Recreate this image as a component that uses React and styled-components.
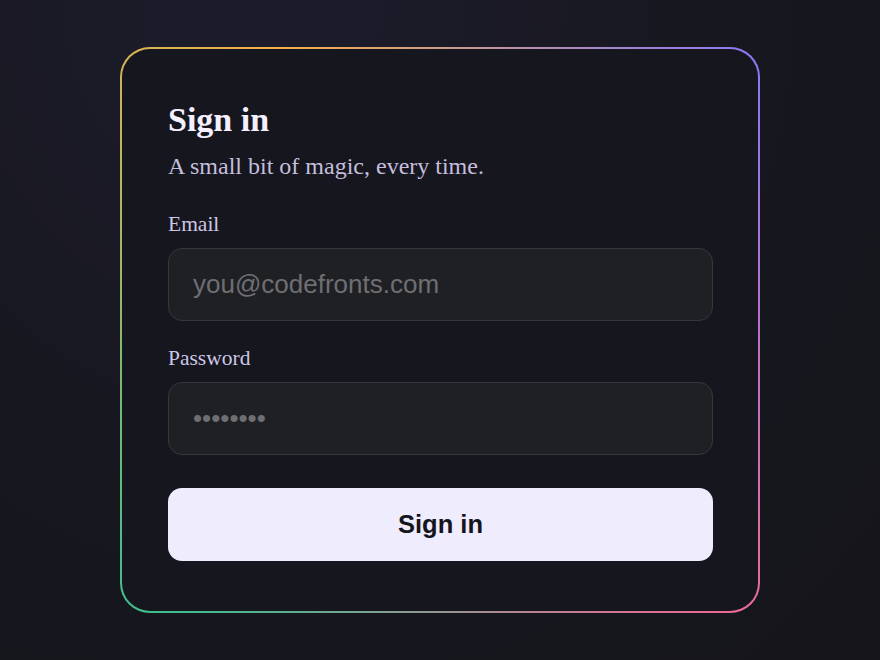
import styled, { createGlobalStyle } from "styled-components";

const GlobalStyle = createGlobalStyle`
  * { box-sizing: border-box; }
  html, body {
    margin: 0;
    padding: 0;
    background: #15151c;
  }
`;

const Page = styled.div`
  min-height: 100vh;
  display: flex;
  align-items: center;
  justify-content: center;
  background: radial-gradient(ellipse at 30% 0%, #1d1c2c 0%, #17171f 55%, #15151b 100%);
`;

// gradient ring around the card
const Frame = styled.div`
  width: 640px;
  padding: 2px;
  border-radius: 30px;
  background: conic-gradient(
    from 330deg,
    #f5b047 0deg,
    #8b78f4 80deg,
    #ec6a95 165deg,
    #3dbf8c 255deg,
    #f5b047 360deg
  );
`;

const Card = styled.div`
  border-radius: 28px;
  background: #16161e;
  padding: 51px 45px 50px 46px;
  font-family: "Liberation Serif", "Times New Roman", serif;
`;

const Title = styled.h1`
  margin: 0;
  font-size: 34px;
  line-height: 1.2;
  font-weight: 700;
  color: #f4f0ff;
`;

const Subtitle = styled.p`
  margin: 11px 0 0;
  font-size: 24px;
  line-height: 1.2;
  color: #c4bfdc;
`;

const Form = styled.form`
  margin-top: 31px;
  display: flex;
  flex-direction: column;
`;

const Field = styled.label`
  display: flex;
  flex-direction: column;
  gap: 10px;
  margin-bottom: ${(p) => (p.$last ? "33px" : "25px")};
`;

const LabelText = styled.span`
  font-size: 21.5px;
  line-height: 1.2;
  color: #cdc6e6;
`;

const Input = styled.input`
  height: 73px;
  width: 100%;
  padding: 0 24px;
  border: 1.5px solid #36363b;
  border-radius: 14px;
  background: #1f2024;
  color: #e8e6f0;
  font-family: "Liberation Sans", Arial, sans-serif;
  font-size: 26px;
  outline: none;

  &::placeholder {
    color: #6e6e73;
  }
`;

const Button = styled.button`
  height: 73px;
  width: 100%;
  border: none;
  border-radius: 14px;
  background: #efecfe;
  color: #15151d;
  font-family: "Liberation Sans", Arial, sans-serif;
  font-size: 25.5px;
  font-weight: 700;
  cursor: pointer;
`;

export default function App() {
  return (
    <>
      <GlobalStyle />
      <Page>
        <Frame>
          <Card>
            <Title>Sign in</Title>
            <Subtitle>A small bit of magic, every time.</Subtitle>
            <Form onSubmit={(e) => e.preventDefault()}>
              <Field>
                <LabelText>Email</LabelText>
                <Input type="email" placeholder="you@codefronts.com" />
              </Field>
              <Field $last>
                <LabelText>Password</LabelText>
                <Input type="password" placeholder="••••••••" />
              </Field>
              <Button type="submit">Sign in</Button>
            </Form>
          </Card>
        </Frame>
      </Page>
    </>
  );
}
